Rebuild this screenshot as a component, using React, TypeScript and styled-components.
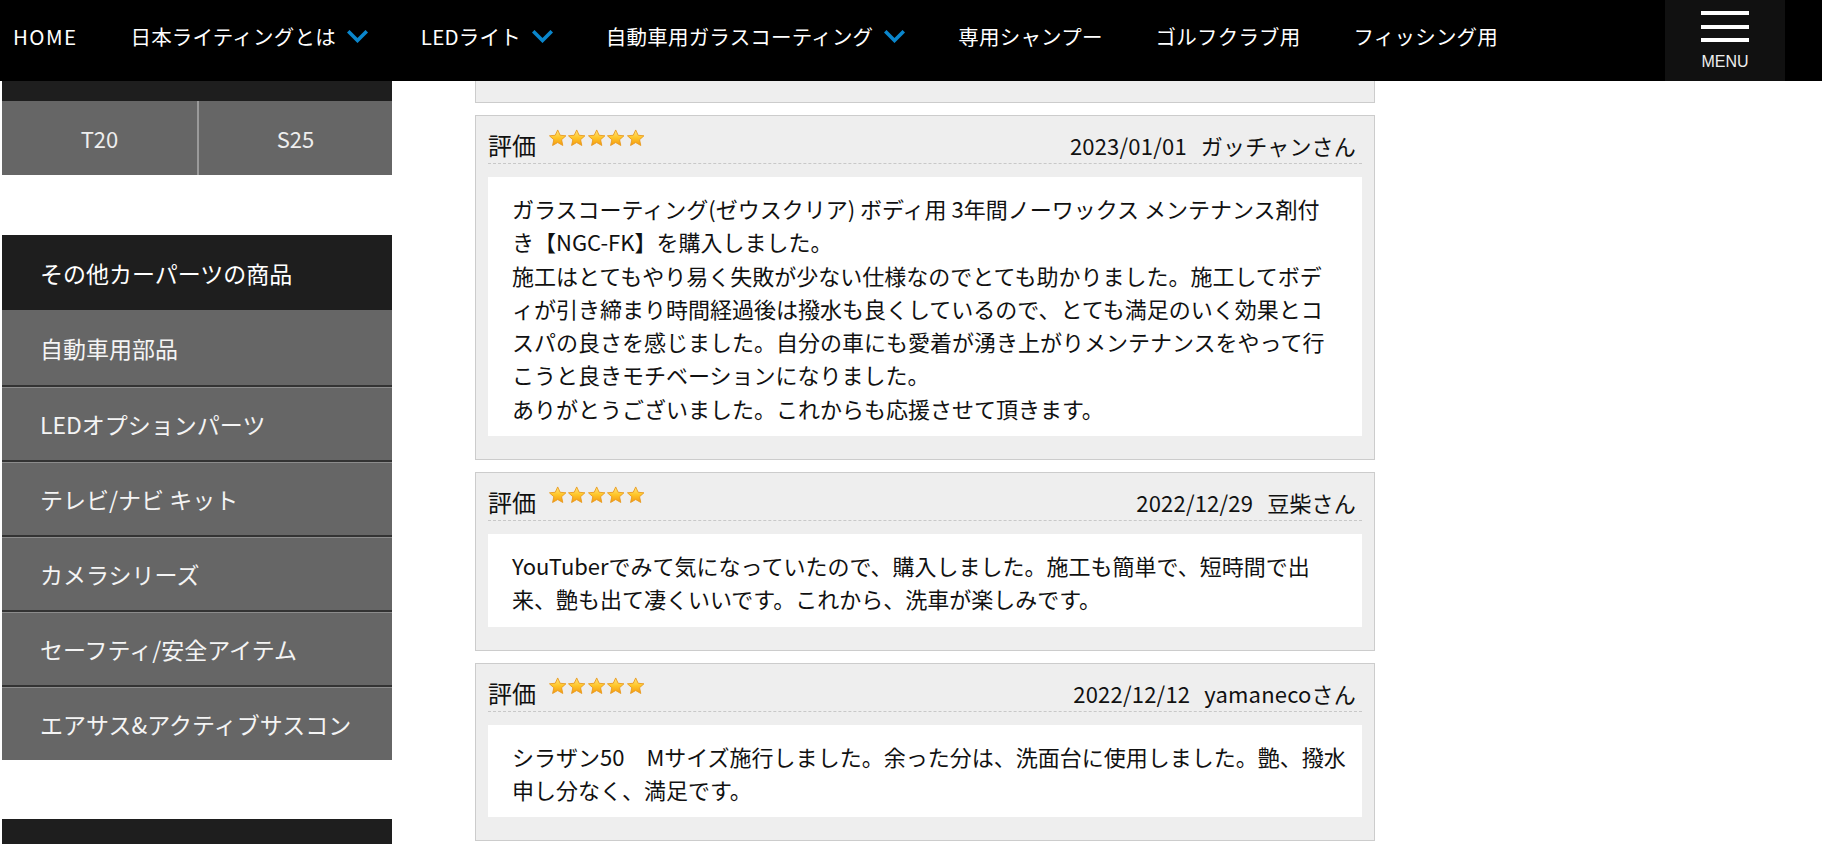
import React from "react";
import styled, { createGlobalStyle } from "styled-components";

const GlobalStyle = createGlobalStyle`
  html, body { margin: 0; padding: 0; background: #fff; overflow: hidden; }
  body { font-family: "Noto Sans CJK JP", "Noto Sans", sans-serif; color: #111; }
  *, *::before, *::after { box-sizing: border-box; }
`;

const Header = styled.header`
  height: 81px;
  background: #000;
  display: flex;
  justify-content: space-between;
  padding-right: 37px;
`;

const NavList = styled.ul`
  list-style: none;
  margin: 0;
  padding: 0 0 8px 13px;
  display: flex;
  align-items: center;
  gap: 53px;
`;

const NavItem = styled.li<{ $latin?: boolean }>`
  display: flex;
  align-items: center;
  gap: 11px;
  color: #fff;
  font-size: 20.5px;
  line-height: 1;
  white-space: nowrap;
  letter-spacing: ${(p) => (p.$latin ? "1.4px" : "0.2px")};
`;

const MenuButton = styled.div`
  width: 120px;
  height: 81px;
  background: #111;
  display: flex;
  flex-direction: column;
  align-items: center;
  padding-top: 11px;
`;

const MenuBar = styled.span`
  display: block;
  width: 48px;
  height: 4px;
  background: #fff;
  margin-bottom: 9.5px;
  &:nth-child(3) { margin-bottom: 12px; }
`;

const MenuLabel = styled.span`
  font-family: "Liberation Sans", Arial, sans-serif;
  font-size: 16px;
  line-height: 16px;
  color: #eee;
`;

const Page = styled.div`
  display: flex;
  align-items: flex-start;
`;

const Sidebar = styled.aside`
  margin-left: 2px;
  width: 390px;
  flex: none;
  display: flex;
  flex-direction: column;
`;

const DarkCap = styled.div<{ $h: number; $mt?: number }>`
  height: ${(p) => p.$h}px;
  margin-top: ${(p) => p.$mt ?? 0}px;
  background: #1e1e1e;
`;

const SizeRow = styled.div`
  display: grid;
  grid-template-columns: 1fr 1fr;
  height: 74px;
  background: #666;
`;

const SizeCell = styled.div`
  display: flex;
  align-items: center;
  justify-content: center;
  color: #eee;
  font-size: 22px;
  & + & { border-left: 2px solid #9a9a9a; }
`;

const CategoryTitle = styled.div`
  margin-top: 60px;
  height: 75px;
  background: #1e1e1e;
  color: #fff;
  font-size: 23px;
  display: flex;
  align-items: center;
  padding-left: 38px;
`;

const CategoryItem = styled.div`
  height: 75px;
  background: #666;
  color: #f4f4f4;
  font-size: 23px;
  display: flex;
  align-items: center;
  padding-left: 38px;
  & + & {
    border-top: 2px solid #333;
    box-shadow: inset 0 1px 0 #8c8c8c;
  }
`;

const Main = styled.main`
  margin-left: 83px;
  width: 900px;
  flex: none;
  display: flex;
  flex-direction: column;
  gap: 12px;
`;

const PartialBox = styled.div`
  height: 22px;
  background: #eee;
  border: 1px solid #ccc;
  border-top: none;
`;

const ReviewBox = styled.section`
  background: #eee;
  border: 1px solid #ccc;
  padding: 12px 12px 23px;
`;

const ReviewHead = styled.div`
  height: 36px;
  display: flex;
  align-items: flex-end;
  border-bottom: 1px dashed #c8c8c8;
  padding-bottom: 3px;
`;

const RatingLabel = styled.span`
  font-size: 24px;
  line-height: 30px;
`;

const Stars = styled.span`
  align-self: flex-start;
  margin: 1px 0 0 12px;
  display: flex;
`;

const Meta = styled.span`
  margin-left: auto;
  display: flex;
  gap: 14px;
  font-size: 22px;
  line-height: 30px;
  padding-right: 6px;
  letter-spacing: 0.2px;
`;

const ReviewBody = styled.div`
  margin-top: 13px;
  background: #fff;
  padding: 15px 24px 11px;
  font-size: 22px;
  line-height: 33.3px;
  color: #111;
`;

const BodyLine = styled.span`
  display: block;
  white-space: nowrap;
`;

const Chevron = () => (
  <svg width="21" height="13" viewBox="0 0 21 13" aria-hidden="true">
    <polyline points="2.5,2.5 10.5,10.5 18.5,2.5" fill="none" stroke="#0a86cc" strokeWidth="3.6" strokeLinecap="square" />
  </svg>
);

const Star = ({ id }: { id: string }) => (
  <svg width="19.4" height="18" viewBox="0 0 20 19" aria-hidden="true">
    <defs>
      <linearGradient id={id} x1="0" y1="0" x2="0" y2="1">
        <stop offset="0" stopColor="#ffe680" />
        <stop offset="0.5" stopColor="#ffc629" />
        <stop offset="1" stopColor="#f39a12" />
      </linearGradient>
    </defs>
    <path
      d="M10 1 L12.6 6.6 L18.7 7.2 L14.1 11.3 L15.4 17.4 L10 14.3 L4.6 17.4 L5.9 11.3 L1.3 7.2 L7.4 6.6 Z"
      fill={`url(#${id})`}
      stroke="#e8961a"
      strokeWidth="0.9"
      strokeLinejoin="round"
    />
  </svg>
);

const navItems: { label: string; drop?: boolean; latin?: boolean }[] = [
  { label: "HOME", latin: true },
  { label: "日本ライティングとは", drop: true },
  { label: "LEDライト", drop: true },
  { label: "自動車用ガラスコーティング", drop: true },
  { label: "専用シャンプー" },
  { label: "ゴルフクラブ用" },
  { label: "フィッシング用" },
];

const categories = [
  "自動車用部品",
  "LEDオプションパーツ",
  "テレビ/ナビ キット",
  "カメラシリーズ",
  "セーフティ/安全アイテム",
  "エアサス&アクティブサスコン",
];

const reviews: { date: string; name: string; lines: string[] }[] = [
  {
    date: "2023/01/01",
    name: "ガッチャンさん",
    lines: [
      "ガラスコーティング(ゼウスクリア) ボディ用 3年間ノーワックス メンテナンス剤付",
      "き【NGC-FK】を購入しました。",
      "施工はとてもやり易く失敗が少ない仕様なのでとても助かりました。施工してボデ",
      "ィが引き締まり時間経過後は撥水も良くしているので、とても満足のいく効果とコ",
      "スパの良さを感じました。自分の車にも愛着が湧き上がりメンテナンスをやって行",
      "こうと良きモチベーションになりました。",
      "ありがとうございました。これからも応援させて頂きます。",
    ],
  },
  {
    date: "2022/12/29",
    name: "豆柴さん",
    lines: [
      "YouTuberでみて気になっていたので、購入しました。施工も簡単で、短時間で出",
      "来、艶も出て凄くいいです。これから、洗車が楽しみです。",
    ],
  },
  {
    date: "2022/12/12",
    name: "yamanecoさん",
    lines: [
      "シラザン50\u3000Mサイズ施行しました。余った分は、洗面台に使用しました。艶、撥水",
      "申し分なく、満足です。",
    ],
  },
];

export default function App() {
  return (
    <>
      <GlobalStyle />
      <Header>
        <NavList>
          {navItems.map((n) => (
            <NavItem key={n.label} $latin={n.latin}>
              {n.label}
              {n.drop && <Chevron />}
            </NavItem>
          ))}
        </NavList>
        <MenuButton>
          <MenuBar />
          <MenuBar />
          <MenuBar />
          <MenuLabel>MENU</MenuLabel>
        </MenuButton>
      </Header>
      <Page>
        <Sidebar>
          <DarkCap $h={20} />
          <SizeRow>
            <SizeCell>T20</SizeCell>
            <SizeCell>S25</SizeCell>
          </SizeRow>
          <CategoryTitle>その他カーパーツの商品</CategoryTitle>
          {categories.map((c) => (
            <CategoryItem key={c}>{c}</CategoryItem>
          ))}
          <DarkCap $h={80} $mt={59} />
        </Sidebar>
        <Main>
          <PartialBox />
          {reviews.map((r, i) => (
            <ReviewBox key={r.date}>
              <ReviewHead>
                <RatingLabel>評価</RatingLabel>
                <Stars>
                  {[0, 1, 2, 3, 4].map((s) => (
                    <Star key={s} id={`sg-${i}-${s}`} />
                  ))}
                </Stars>
                <Meta>
                  <span>{r.date}</span>
                  <span>{r.name}</span>
                </Meta>
              </ReviewHead>
              <ReviewBody>
                {r.lines.map((l, k) => (
                  <BodyLine key={k}>{l}</BodyLine>
                ))}
              </ReviewBody>
            </ReviewBox>
          ))}
        </Main>
      </Page>
    </>
  );
}
